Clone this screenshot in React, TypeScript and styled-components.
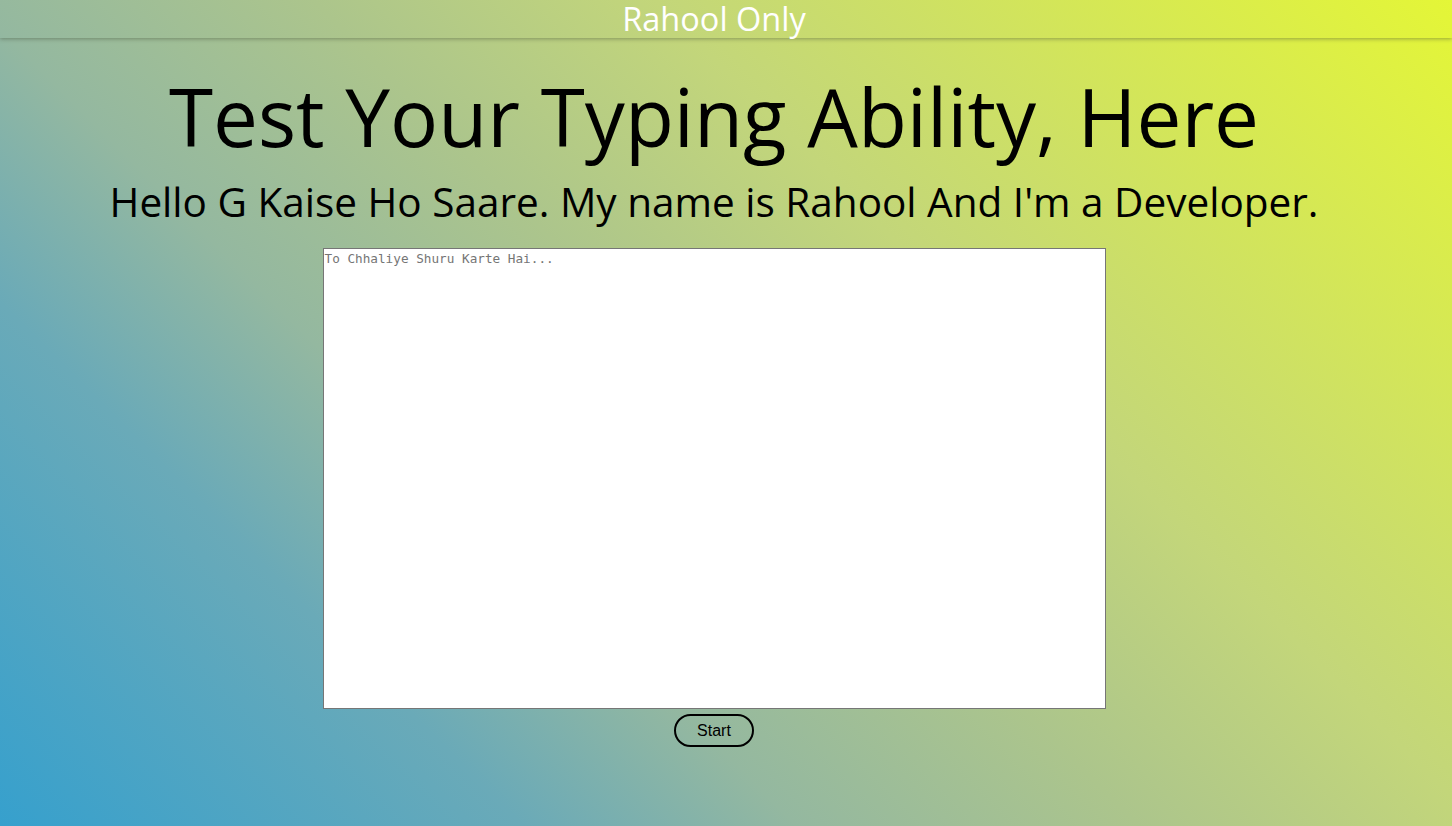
import React from "react";
import styled, { createGlobalStyle } from "styled-components";

const GlobalStyle = createGlobalStyle`
  html, body {
    margin: 0;
    padding: 0;
    height: 100%;
  }
  body {
    font-family: "Open Sans", "Noto Sans", sans-serif;
    background: linear-gradient(45deg, #36a0cd 0%, #6aaab8 23%, #94b8a0 35%, #acc58c 50%, #c3d67a 65%, #e4f637 100%);
    min-height: 826px;
    overflow: hidden;
  }
`;

const Page = styled.div`
  display: flex;
  flex-direction: column;
  min-height: 826px;
`;

const Header = styled.header`
  height: 38px;
  box-shadow: 0 1px 4px rgba(60, 70, 50, 0.45);
  display: flex;
  justify-content: center;
  align-items: center;
  padding-right: 24px;
`;

const Brand = styled.div`
  color: #ffffff;
  font-size: 32.5px;
  line-height: 38px;
  font-weight: 500;
`;

const Main = styled.main`
  display: flex;
  flex-direction: column;
  align-items: center;
  padding-right: 24px;
`;

const Title = styled.h1`
  margin: 30px 0 0;
  font-size: 80px;
  line-height: 96px;
  font-weight: 400;
  color: #000;
`;

const Subtitle = styled.h2`
  margin: 10px 0 0;
  font-size: 40.5px;
  line-height: 56px;
  font-weight: 400;
  color: #000;
`;

const TypingArea = styled.textarea`
  margin-top: 18px;
  box-sizing: border-box;
  width: 783px;
  height: 461px;
  border: 1px solid #767676;
  padding: 2px 1px;
  background: #fff;
  font-family: "DejaVu Sans Mono", monospace;
  font-size: 12.7px;
  resize: none;
  outline: none;
  &::placeholder {
    color: #757575;
  }
`;

const StartButton = styled.button`
  margin-top: 5px;
  box-sizing: border-box;
  height: 33px;
  padding: 0 21px;
  border: 2px solid #000;
  border-radius: 17px;
  background: transparent;
  font-family: "Liberation Sans", Arial, sans-serif;
  font-size: 16px;
  color: #000;
  cursor: pointer;
`;

export default function App() {
  return (
    <>
      <GlobalStyle />
      <Page>
        <Header>
          <Brand>Rahool Only</Brand>
        </Header>
        <Main>
          <Title>Test Your Typing Ability, Here</Title>
          <Subtitle>Hello G Kaise Ho Saare. My name is Rahool And I'm a Developer.</Subtitle>
          <TypingArea placeholder="To Chhaliye Shuru Karte Hai..." />
          <StartButton>Start</StartButton>
        </Main>
      </Page>
    </>
  );
}
